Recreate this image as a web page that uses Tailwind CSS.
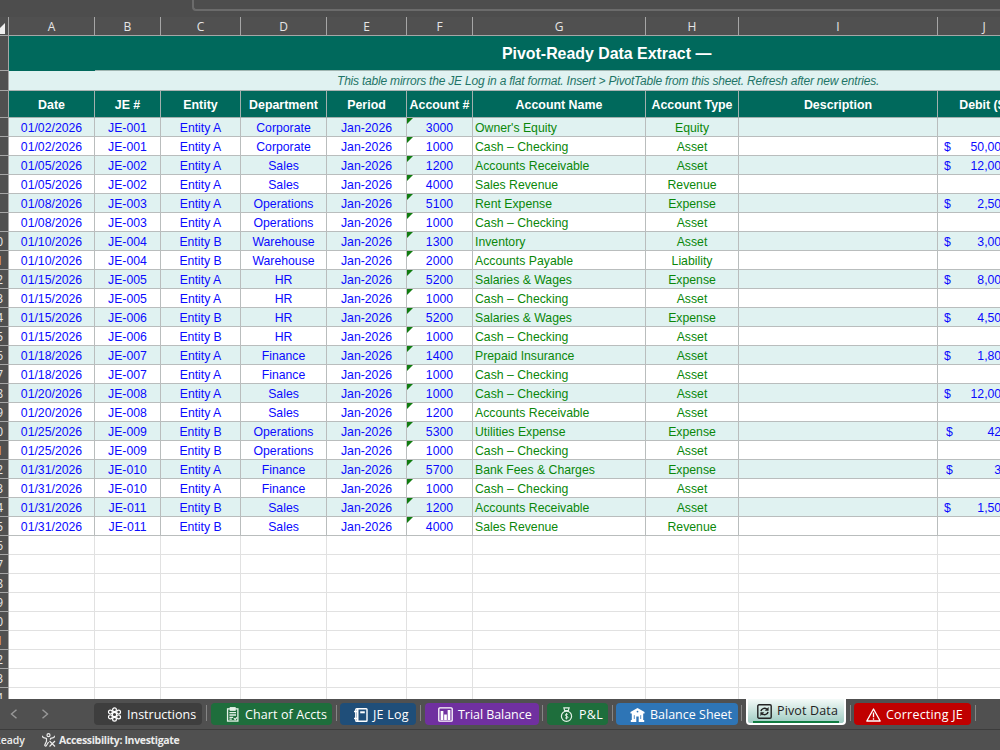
<!DOCTYPE html>
<html lang="en">
<head>
   <meta charset="UTF-8">
   <meta name="viewport" content="width=device-width, initial-scale=1.0">
   <title>Pivot Data</title>
   <script src="https://cdn.jsdelivr.net/npm/@tailwindcss/browser@4"></script>
</head>
<body class="w-[1000px] h-[750px] overflow-hidden bg-[#505050] flex flex-col font-['Liberation_Sans',Arial,sans-serif]">

   <!-- formula bar edge -->
   <div class="h-[17px] shrink-0 bg-[#4d4d4d] flex justify-end items-start">
      <div class="w-[808px] h-[11px] border-l-2 border-b-2 border-[#6b6b6b] rounded-bl-[4px]"></div>
   </div>

   <!-- column letters -->
   <div id="columnLetters" class="h-[19px] shrink-0 w-[1031px] grid grid-cols-[9px_86px_66px_80px_86px_80px_66px_173px_93px_199px_93px] border-b border-[#a6a6a6] font-['Open_Sans',sans-serif] text-[12px] leading-[20px] text-center text-[#e6e6e6]"></div>

   <!-- sheet -->
   <div class="h-[663px] shrink-0 w-[1031px] overflow-hidden bg-white">
      <div class="flex h-[35px]">
         <div class="w-[9px] bg-[#505050] border-r border-b border-[#a6a6a6]"></div>
         <div class="w-[86px] bg-[#00695c]"></div>
         <div class="flex-1 bg-[#00695c] border-b border-[#9fb5b1]">
            <h1 class="pl-[407px] pt-[1px] text-[15.9px] leading-[34px] font-bold text-white whitespace-nowrap">Pivot-Ready Data Extract —</h1>
         </div>
      </div>
      <div class="flex h-5">
         <div class="w-[9px] bg-[#505050] border-r border-b border-[#a6a6a6]"></div>
         <div class="flex-1 bg-[#e0f2f1] border-b border-[#a9b3b2]">
            <p class="pl-[328px] text-[12px] tracking-[-0.205px] leading-[20px] italic text-[#1f7567] whitespace-nowrap">This table mirrors the JE Log in a flat format. Insert &gt; PivotTable from this sheet. Refresh after new entries.</p>
         </div>
      </div>
      <div id="headerRow" class="h-[27px] grid grid-cols-[9px_86px_66px_80px_86px_80px_66px_173px_93px_199px_93px] text-[12.4px] leading-[28px] font-bold text-center text-white whitespace-nowrap"></div>
      <div id="sheetBody"></div>
   </div>

   <!-- sheet tabs -->
   <div class="h-[31px] shrink-0 flex items-start bg-[#505050] border-b border-[#3c3c3c] font-['Open_Sans',sans-serif] text-[12.5px] leading-[22px] text-white whitespace-nowrap">
      <div class="w-[94px] h-[30px] flex items-center pl-[10px] gap-[23px]">
         <svg class="w-2 h-[10px]" viewBox="0 0 8 10" fill="none" stroke="#999" stroke-width="1.4"><path d="M6.5 .7 1.5 5l5 4.3"/></svg>
         <svg class="w-2 h-[10px]" viewBox="0 0 8 10" fill="none" stroke="#999" stroke-width="1.4"><path d="M1.5 .7 6.5 5l-5 4.3"/></svg>
      </div>
      <div class="mt-1 h-[22px] w-[108px] rounded-[4px] bg-[#3e3e3e] flex items-center pl-[13px] pt-[1px] gap-[5px]">
         <svg class="w-[15px] h-[15px]" viewBox="0 0 15 15" fill="none" stroke="#fff" stroke-width="1.2">
            <circle cx="7.5" cy="7.5" r="2.2"/>
            <circle cx="7.5" cy="2.8" r="1.9"/><circle cx="11.6" cy="5.1" r="1.9"/><circle cx="11.6" cy="9.9" r="1.9"/>
            <circle cx="7.5" cy="12.2" r="1.9"/><circle cx="3.4" cy="9.9" r="1.9"/><circle cx="3.4" cy="5.1" r="1.9"/>
         </svg>
         <span>Instructions</span>
      </div>
      <div class="mt-[6px] ml-[4px] mr-[4px] h-4 w-px bg-[#858585]"></div>
      <div class="mt-1 h-[22px] w-[121px] rounded-[4px] bg-[#1e6e3c] flex items-center pl-[15px] pt-[1px] gap-[5px]">
         <svg class="w-[14px] h-[15px]" viewBox="0 0 14 16" fill="none" stroke="#e4f2e8" stroke-width="1.4">
            <rect x="1.2" y="2" width="11" height="13"/>
            <rect x="4.2" y=".8" width="5" height="2.6" fill="#e4f2e8"/>
            <path d="M3.2 6h7M3.2 8.5h7M3.2 11h4M3.2 13h2.500"/><path d="m8 12 1.3 1.3 2-2.3"/>
         </svg>
         <span class="tracking-[0.1px]">Chart of Accts</span>
      </div>
      <div class="mt-[6px] ml-[4px] mr-[3px] h-4 w-px bg-[#858585]"></div>
      <div class="mt-1 h-[22px] w-[76px] rounded-[4px] bg-[#1f4e79] flex items-center pl-[14px] pt-[1px] gap-[5px]">
         <svg class="w-[14px] h-[14px]" viewBox="0 0 14 14" fill="none" stroke="#fff" stroke-width="1.4">
            <rect x="1.8" y=".8" width="11.2" height="12.4" rx=".8"/>
            <path d="M3.6 1v12" stroke-width="1.800"/><path d="M0 3.500h3M0 10.500h3"/><path d="M6.2 4.3h4.600" stroke-width="2"/>
         </svg>
         <span class="tracking-[0.25px]">JE Log</span>
      </div>
      <div class="mt-[6px] ml-[4px] mr-[4px] h-4 w-px bg-[#858585]"></div>
      <div class="mt-1 h-[22px] w-[114px] rounded-[4px] bg-[#7030a0] flex items-center pl-[13px] pt-[1px] gap-[5px]">
         <svg class="w-[15px] h-[15px]" viewBox="0 0 15 15" fill="none" stroke="#fff" stroke-width="1.3">
            <rect x=".8" y=".8" width="13.4" height="13.4" rx="1"/>
            <path d="M4 4v9M7.5 7.500v5.500M11 3v10" stroke-width="2.700"/>
         </svg>
         <span class="tracking-[-0.05px]">Trial Balance</span>
      </div>
      <div class="mt-[6px] ml-[3px] mr-[4px] h-4 w-px bg-[#858585]"></div>
      <div class="mt-1 h-[22px] w-[61px] rounded-[4px] bg-[#1e6e3c] flex items-center pl-[13px] pt-[1px] gap-[6px]">
         <svg class="w-[13px] h-[15px]" viewBox="0 0 13 15" fill="none" stroke="#e4f2e8" stroke-width="1.2">
            <circle cx="6.5" cy="9.2" r="5.1"/>
            <path d="M4.8 4.2 3.9.8h5.2l-.9 3.4M4.4 3.6h4.2"/>
            <path d="M8 7.6C7.300 6.800 5.200 6.900 5.200 8.100c0 1.300 2.800.9 2.800 2.200 0 1.200-2.200 1.300-3 .4M6.500 6v6.400" stroke-width=".9"/>
         </svg>
         <span class="tracking-[0.3px]">P&amp;L</span>
      </div>
      <div class="mt-[6px] ml-[4px] mr-[3px] h-4 w-px bg-[#858585]"></div>
      <div class="mt-1 h-[22px] w-[122px] rounded-[4px] bg-[#2e75b6] flex items-center pl-[14px] pt-[1px] gap-[5px]">
         <svg class="w-[15px] h-[14px]" viewBox="0 0 15 14" fill="#fff">
            <path d="M7.500 0 14.500 4v1.600H.5V4z"/><path d="M1.800 5h11.400v7h1v2H.8v-2h1z"/>
            <path d="M4.300 7.200v3.800M10.700 7.200v3.800" stroke="#2e75b6" stroke-width=".8"/>
            <path d="M6.300 8.500h2.400V14H6.300z" fill="#2e75b6"/><circle cx="7.500" cy="3.600" r=".9" fill="#2e75b6"/>
         </svg>
         <span>Balance Sheet</span>
      </div>
      <div class="mt-[6px] ml-[3px] mr-[4px] h-4 w-px bg-[#858585]"></div>
      <div class="h-[26px] w-[100px] rounded-b-[4px] border-x-2 border-b-2 border-white bg-linear-to-b from-[#f4faf8] to-[#9fccc2] px-[5px] text-[#222]">
         <div class="h-[24px] w-[86px] border-b-2 border-[#107c41] flex items-center pt-[2px] pl-[4px] gap-[5px]">
            <svg class="w-[15px] h-[15px] shrink-0" viewBox="0 0 15 15" fill="none" stroke="#222" stroke-width="1.4">
               <rect x=".8" y=".8" width="13.400" height="13.400" rx="1.200"/>
               <path d="M4 7.200c.3-2.600 3.600-3.700 5.800-2M11 7.800c-.3 2.600-3.600 3.700-5.800 2" stroke-width="1.500"/>
               <path d="M11.600 3v3.800H7.800zM3.400 12V8.200h3.800z" fill="#222" stroke="none"/>
            </svg>
            <span class="font-medium tracking-[0.15px]">Pivot Data</span>
         </div>
      </div>
      <div class="mt-[6px] ml-[4px] mr-[3px] h-4 w-px bg-[#858585]"></div>
      <div class="mt-1 h-[22px] w-[117px] rounded-[4px] bg-[#c00000] flex items-center pl-[12px] pt-[1px] gap-[5px]">
         <svg class="w-[15px] h-[14px]" viewBox="0 0 15 14" fill="none" stroke="#fff" stroke-width="1.3">
            <path d="M7.500 1 14.200 13H.8z" stroke-linejoin="round"/><path d="M7.500 4.500v4.700M7.500 10.300v1.400"/>
         </svg>
         <span class="tracking-[0.2px]">Correcting JE</span>
      </div>
      <div class="mt-[6px] ml-[4px] h-4 w-px bg-[#858585]"></div>
   </div>

   <!-- status bar -->
   <div class="h-5 shrink-0 flex items-center font-['Open_Sans',sans-serif] text-[10.5px] leading-5 text-[#ececec] whitespace-nowrap">
      <div class="w-[42px] flex justify-end pr-[17px] font-semibold">Ready</div>
      <svg class="w-[14px] h-[14px] mr-[3px]" viewBox="0 0 14 14" fill="none" stroke="#ececec" stroke-width="1.2">
         <circle cx="6.500" cy="2.200" r="1.500"/>
         <path d="M1 2.800c-.8.8-.2 1.500.6 1.800L4.500 5.500v2.700L2.800 12c-.2 1 1 1.500 1.500.7L6.500 9M12 2.800c.8.8.2 1.500-.6 1.800L8.500 5.500v1.300"/>
         <path d="m7.500 8 5.500 5.500M13 8l-5.500 5.500"/>
      </svg>
      <span class="font-bold tracking-[-0.33px]">Accessibility: Investigate</span>
   </div>

   <script>
      const headers = ['Date', 'JE #', 'Entity', 'Department', 'Period', 'Account #', 'Account Name', 'Account Type', 'Description', 'Debit ($)'];

      // date, JE, entity, department, account, name, type, debit
      const entries = [
         ['01/02/2026', 'JE-001', 'A', 'Corporate', '3000', "Owner's Equity", 'Equity', ''],
         ['01/02/2026', 'JE-001', 'A', 'Corporate', '1000', 'Cash – Checking', 'Asset', '50,000.00'],
         ['01/05/2026', 'JE-002', 'A', 'Sales', '1200', 'Accounts Receivable', 'Asset', '12,000.00'],
         ['01/05/2026', 'JE-002', 'A', 'Sales', '4000', 'Sales Revenue', 'Revenue', ''],
         ['01/08/2026', 'JE-003', 'A', 'Operations', '5100', 'Rent Expense', 'Expense', '2,500.00'],
         ['01/08/2026', 'JE-003', 'A', 'Operations', '1000', 'Cash – Checking', 'Asset', ''],
         ['01/10/2026', 'JE-004', 'B', 'Warehouse', '1300', 'Inventory', 'Asset', '3,000.00'],
         ['01/10/2026', 'JE-004', 'B', 'Warehouse', '2000', 'Accounts Payable', 'Liability', ''],
         ['01/15/2026', 'JE-005', 'A', 'HR', '5200', 'Salaries & Wages', 'Expense', '8,000.00'],
         ['01/15/2026', 'JE-005', 'A', 'HR', '1000', 'Cash – Checking', 'Asset', ''],
         ['01/15/2026', 'JE-006', 'B', 'HR', '5200', 'Salaries & Wages', 'Expense', '4,500.00'],
         ['01/15/2026', 'JE-006', 'B', 'HR', '1000', 'Cash – Checking', 'Asset', ''],
         ['01/18/2026', 'JE-007', 'A', 'Finance', '1400', 'Prepaid Insurance', 'Asset', '1,800.00'],
         ['01/18/2026', 'JE-007', 'A', 'Finance', '1000', 'Cash – Checking', 'Asset', ''],
         ['01/20/2026', 'JE-008', 'A', 'Sales', '1000', 'Cash – Checking', 'Asset', '12,000.00'],
         ['01/20/2026', 'JE-008', 'A', 'Sales', '1200', 'Accounts Receivable', 'Asset', ''],
         ['01/25/2026', 'JE-009', 'B', 'Operations', '5300', 'Utilities Expense', 'Expense', '420.00'],
         ['01/25/2026', 'JE-009', 'B', 'Operations', '1000', 'Cash – Checking', 'Asset', ''],
         ['01/31/2026', 'JE-010', 'A', 'Finance', '5700', 'Bank Fees & Charges', 'Expense', '35.00'],
         ['01/31/2026', 'JE-010', 'A', 'Finance', '1000', 'Cash – Checking', 'Asset', ''],
         ['01/31/2026', 'JE-011', 'B', 'Sales', '1200', 'Accounts Receivable', 'Asset', '1,500.00'],
         ['01/31/2026', 'JE-011', 'B', 'Sales', '4000', 'Sales Revenue', 'Revenue', ''],
      ];

      const rowClass = 'h-[19px] grid grid-cols-[9px_86px_66px_80px_86px_80px_66px_173px_93px_199px_93px] text-[12.25px] leading-[20px] text-center whitespace-nowrap';
      const cell = 'h-[19px] border-r border-b border-[#b9bdbd]';

      function rowNumber(n) {
         const color = n % 10 === 1 ? 'text-[#e8a860]' : 'text-[#e6e6e6]';
         return `<div class="h-[19px] bg-[#505050] border-r border-b border-[#a6a6a6] overflow-hidden flex justify-end pr-[5px] font-['Open_Sans',sans-serif] text-[12px] leading-[20px] ${color}">${n > 9 ? n : ''}</div>`;
      }

      function debit(value) {
         if (!value) return '';
         const pad = value.length < 7 ? 'pl-2' : 'pl-[6px]';
         return `<div class="flex justify-between ${pad} pr-[5px]"><span>$</span><span>${value}</span></div>`;
      }

      document.getElementById('columnLetters').innerHTML =
         `<div class="border-r border-[#a6a6a6] flex items-end pb-[3px]"><svg class="w-[5px] h-[11px]" viewBox="0 0 5 11"><path d="M5 0v11H0V5z" fill="#f0f0f0"/></svg></div>` +
         'ABCDEFGHIJ'.split('').map(c => `<div class="border-r border-[#a6a6a6]">${c}</div>`).join('');

      document.getElementById('headerRow').innerHTML =
         `<div class="h-[27px] bg-[#505050] border-r border-b border-[#a6a6a6]"></div>` +
         headers.map(h => `<div class="h-[27px] bg-[#00695c] border-r border-b border-[#a3b0ae]">${h}</div>`).join('');

      let html = entries.map(([date, je, entity, dept, account, name, type, amount], i) => `
         <div class="${rowClass} ${i % 2 ? 'bg-white' : 'bg-[#e0f2f1]'} text-[#0a0aff]">
            ${rowNumber(i + 4)}
            <div class="${cell}">${date}</div>
            <div class="${cell}">${je}</div>
            <div class="${cell}">Entity ${entity}</div>
            <div class="${cell}">${dept}</div>
            <div class="${cell}">Jan-2026</div>
            <div class="${cell} relative"><svg class="absolute left-0 top-0 w-[6px] h-[6px]" viewBox="0 0 6 6"><path d="M0 0h6L0 6z" fill="#107c10"/></svg>${account}</div>
            <div class="${cell} text-left pl-[2px] text-[#0a870a]">${name.replace('&', '&amp;')}</div>
            <div class="${cell} text-[#0a870a]">${type}</div>
            <div class="${cell}"></div>
            <div class="${cell}">${debit(amount)}</div>
         </div>`).join('');

      for (let n = 26; n <= 34; n++) {
         html += `<div class="${rowClass}">${rowNumber(n)}${headers.map(() => '<div class="border-r border-b border-[#e1e1e1]"></div>').join('')}</div>`;
      }
      document.getElementById('sheetBody').innerHTML = html;
   </script>
</body>
</html>
